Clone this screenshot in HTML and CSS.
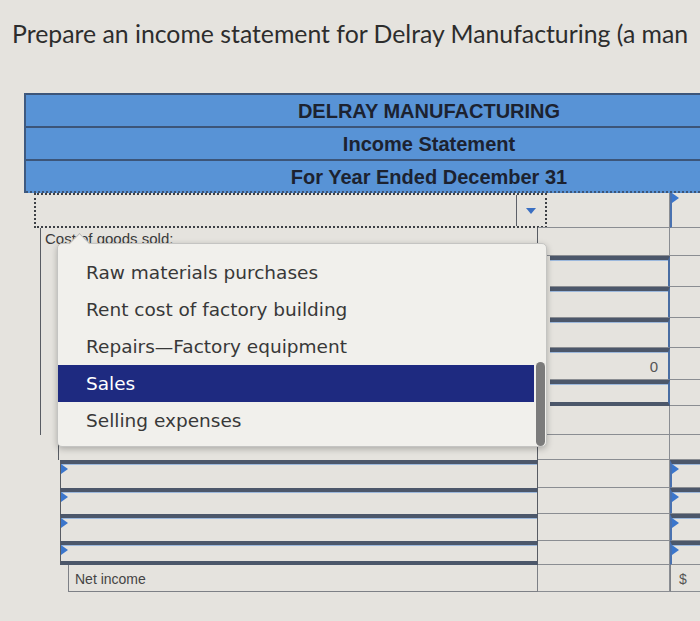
FILE: index.html
```html
<!DOCTYPE html>
<html>

<head>
    <meta charset="utf-8">
    <meta name="viewport" content="width=device-width, initial-scale=1.0">
    <title>Income statement</title>
    <link rel="stylesheet" href="styles.css">
</head>

<body>

    <p class="prompt">Prepare an income statement for Delray Manufacturing (a man</p>

    <div class="sheet">
        <div class="head">
            <div class="head-row">DELRAY MANUFACTURING</div>
            <div class="head-row">Income Statement</div>
            <div class="head-row">For Year Ended December 31</div>
        </div>

        <div class="grid">
            <!-- row with the open select -->
            <div class="c1 pick"><span class="select"></span><span class="caret"></span></div>
            <div class="c2"></div>
            <div class="c3 flag edge"></div>

            <div class="c1 label">Cost of goods sold:</div>
            <div class="c2"></div>
            <div class="c3"></div>

            <div class="c1"></div>
            <div class="c2 in"></div>
            <div class="c3"></div>

            <div class="c1"></div>
            <div class="c2 in"></div>
            <div class="c3"></div>

            <div class="c1"></div>
            <div class="c2 in"></div>
            <div class="c3"></div>

            <div class="c1"></div>
            <div class="c2 in num">0</div>
            <div class="c3"></div>

            <div class="c1"></div>
            <div class="c2 in last"></div>
            <div class="c3"></div>

            <div class="c1"></div>
            <div class="c2"></div>
            <div class="c3"></div>

            <div class="c1 inset"></div>
            <div class="c2"></div>
            <div class="c3"></div>

            <div class="c1 in flag"></div>
            <div class="c2"></div>
            <div class="c3 in flag edge"></div>

            <div class="c1 in flag"></div>
            <div class="c2"></div>
            <div class="c3 in flag edge"></div>

            <div class="c1 in flag"></div>
            <div class="c2"></div>
            <div class="c3 in flag edge"></div>

            <div class="c1 in flag last"></div>
            <div class="c2"></div>
            <div class="c3 in flag edge"></div>

            <div class="c1 label total">Net income</div>
            <div class="c2"></div>
            <div class="c3 cash">$</div>
        </div>

        <div class="menu">
            <ul class="options">
                <li>Raw materials purchases</li>
                <li>Rent cost of factory building</li>
                <li>Repairs—Factory equipment</li>
                <li class="picked">Sales</li>
                <li>Selling expenses</li>
            </ul>
            <span class="thumb"></span>
        </div>
    </div>

</body>

</html>
```

FILE: styles.css
```css
* {
    box-sizing: border-box;
}

body {
    margin: 0;
    background: #e5e3de;
    font-family: "Liberation Sans", Arial, sans-serif;
    color: #333;
    overflow: hidden;
}

.prompt {
    margin: 0;
    padding: 19px 0 0 12px;
    font-family: Lato, "Open Sans", sans-serif;
    font-size: 24.8px;
    line-height: 30px;
    color: #2d2d2d;
    white-space: nowrap;
}

.sheet {
    position: relative;
    width: 808px;
    margin: 44px 0 0 24px;
}

.head {
    border-left: 2px solid #3f5a80;
}

.head-row {
    height: 33px;
    line-height: 32px;
    background: #5893d6;
    border-top: 2px solid #3c5579;
    text-align: center;
    font-size: 20px;
    font-weight: bold;
    color: #1c2230;
}

.head-row:last-child {
    border-bottom: 2px dotted #3c5579;
    height: 34px;
}

.grid {
    display: grid;
    grid-template-columns: 498px 132px 1fr;
    grid-template-rows: 35px 28px 31px 31px 30px 32px 26px 29px 25px 28px 26px 27px 24px 27px;
    margin: 0 0 0 16px;
}

.c1 {
    position: relative;
    border-left: 1px solid #585c63;
    border-right: 1px solid #585c63;
}

.c2 {
    position: relative;
    border-bottom: 1px solid #8a8d92;
    border-right: 1px solid #8a8d92;
}

.c3 {
    position: relative;
    border-bottom: 1px solid #8a8d92;
}

.pick {
    display: flex;
    border: 2px dotted #3d4045;
    margin-left: -6px;
    margin-right: -9px;
}

.select {
    flex: 1;
    border-right: 1px solid #5c6068;
}

.caret {
    width: 28px;
    position: relative;
}

.caret::after {
    content: "";
    position: absolute;
    left: 9px;
    top: 13px;
    border-top: 6px solid #3a6fc2;
    border-left: 5px solid transparent;
    border-right: 5px solid transparent;
}

.label {
    padding: 2px 0 0 4px;
    font-size: 15px;
    line-height: 18px;
    color: #3a3a3a;
}

.total {
    margin-left: 28px;
    padding: 5px 0 0 6px;
    font-size: 14px;
    border: 1px solid #7d8086;
    border-top: none;
    color: #444;
}

.inset {
    margin-left: 18px;
}

.in {
    border-top: 4px solid #4c576a;
    box-shadow: inset 0 1px 0 #9cb8dc;
}

.c2.in {
    margin-left: 12px;
    border-right: 2px solid #4a6ea3;
}

.c1.in {
    margin-left: 20px;
}

.last {
    border-bottom: 4px solid #4c576a;
}

.flag::before {
    content: "";
    position: absolute;
    left: 0;
    top: 0;
    border-left: 7px solid #3b76cc;
    border-top: 5px solid transparent;
    border-bottom: 5px solid transparent;
}

.edge {
    border-left: 2px solid #4a72b0;
}

.num {
    text-align: right;
    padding: 6px 10px 0 0;
    font-size: 15px;
    color: #555;
}

.cash {
    border-left: 1px solid #7d8086;
    padding: 6px 0 0 8px;
    font-size: 14px;
    color: #555;
}

.menu {
    position: absolute;
    left: 33px;
    top: 150px;
    width: 490px;
    height: 204px;
    background: #f1f0ec;
    border: 1px solid #c4c4c2;
    border-radius: 5px;
    box-shadow: 0 2px 6px rgba(0, 0, 0, 0.25);
    font-family: "DejaVu Sans", Verdana, sans-serif;
    font-size: 18.5px;
    color: #383838;
}

.menu::before {
    content: "";
    position: absolute;
    left: 14px;
    top: -8px;
    width: 14px;
    height: 14px;
    background: #f1f0ec;
    border-top: 1px solid #b9b9b7;
    border-left: 1px solid #b9b9b7;
    transform: rotate(45deg);
}

.options {
    list-style: none;
    margin: 0;
    padding: 10px 0 0 0;
}

.options li {
    height: 37px;
    line-height: 37px;
    padding-left: 28px;
    margin-right: 12px;
}

.options .picked {
    background: #1e2a80;
    color: #fff;
}

.thumb {
    position: absolute;
    right: 1px;
    top: 118px;
    width: 9px;
    height: 84px;
    background: #7b7b7b;
    border-radius: 5px;
}
```
